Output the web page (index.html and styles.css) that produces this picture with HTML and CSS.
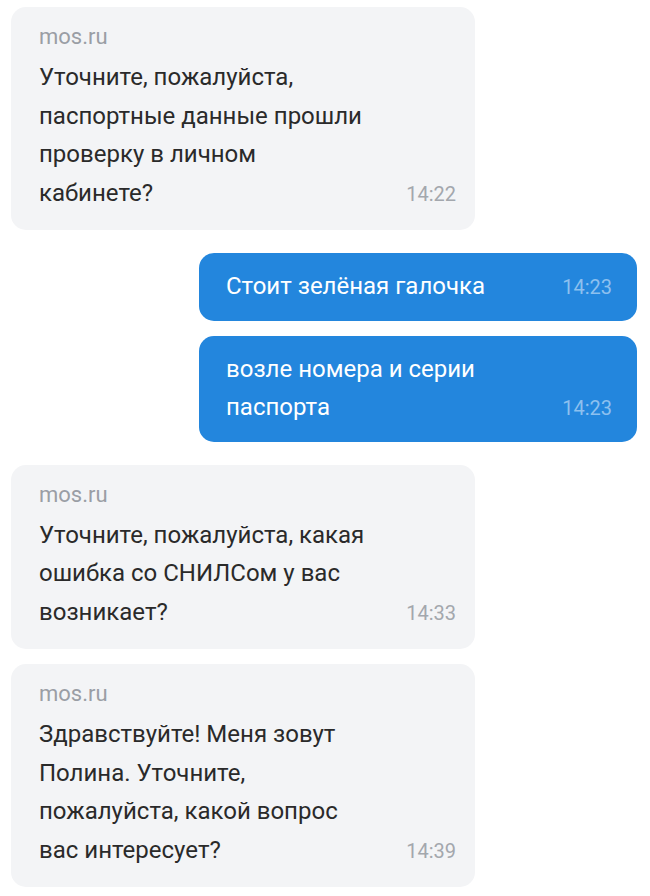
FILE: index.html
```html
<!DOCTYPE html>
<html lang="ru">
<head>
<meta charset="utf-8">
<title>Чат mos.ru</title>
<link rel="stylesheet" href="styles.css">
</head>
<body>
<div class="chat">
  <div class="msg in">
    <div class="sender">mos.ru</div>
    <div class="row">
      <p class="text">Уточните, пожалуйста,<br>паспортные данные прошли<br>проверку в личном<br>кабинете?</p>
      <span class="time">14:22</span>
    </div>
  </div>
  <div class="msg out switch">
    <div class="row">
      <p class="text">Стоит зелёная галочка</p>
      <span class="time">14:23</span>
    </div>
  </div>
  <div class="msg out">
    <div class="row">
      <p class="text">возле номера и серии<br>паспорта</p>
      <span class="time">14:23</span>
    </div>
  </div>
  <div class="msg in switch">
    <div class="sender">mos.ru</div>
    <div class="row">
      <p class="text">Уточните, пожалуйста, какая<br>ошибка со СНИЛСом у вас<br>возникает?</p>
      <span class="time">14:33</span>
    </div>
  </div>
  <div class="msg in">
    <div class="sender">mos.ru</div>
    <div class="row">
      <p class="text">Здравствуйте! Меня зовут<br>Полина. Уточните,<br>пожалуйста, какой вопрос<br>вас интересует?</p>
      <span class="time">14:39</span>
    </div>
  </div>
</div>
</body>
</html>
```

FILE: styles.css
```css
* { box-sizing: border-box; }
html, body { margin: 0; padding: 0; background: #ffffff; }
body {
  font-family: Roboto, "Noto Sans", "Liberation Sans", sans-serif;
  width: 650px;
  height: 896px;
  overflow: hidden;
}
.chat {
  display: flex;
  flex-direction: column;
  gap: 15px;
  padding: 7px 13px 0 11px;
}
.msg {
  border-radius: 15px;
}
.msg.switch { margin-top: 8px; }
.msg.in {
  align-self: flex-start;
  width: 464px;
  background: #f3f4f6;
  padding: 15px 19px 17px 28px;
}
.msg.out {
  align-self: flex-end;
  width: 438px;
  background: #2386dd;
  padding: 14px 25px 14px 27px;
}
.sender {
  font-size: 22px;
  line-height: 30px;
  margin-bottom: 6px;
  color: #9a9ea5;
}
.row {
  display: flex;
  justify-content: space-between;
  align-items: last baseline;
}
.text {
  margin: 0;
  font-size: 24px;
  line-height: 38.5px;
  color: #2a2a2a;
}
.out .text { color: #ffffff; }
.time {
  font-size: 20px;
  line-height: 38.5px;
  color: #a3a7ad;
}
.out .time { color: #8dc0ef; }
```
